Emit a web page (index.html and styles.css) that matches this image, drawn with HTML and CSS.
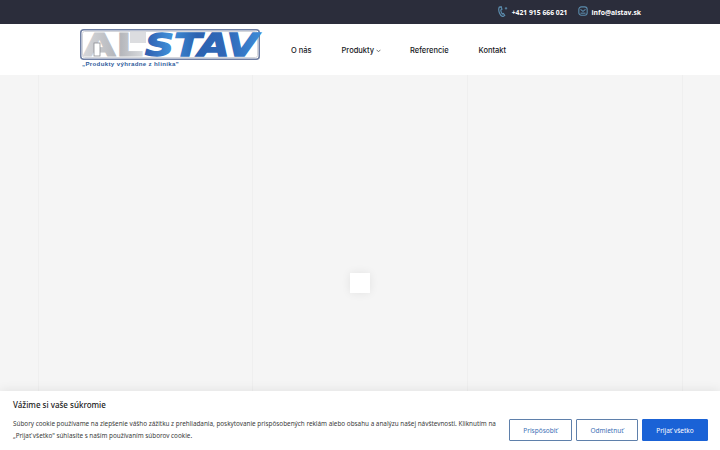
FILE: index.html
```html
<!DOCTYPE html>
<html lang="sk">
  <head>
    <meta charset="UTF-8" />
    <title>Alstav</title>
    <link rel="stylesheet" href="styles.css">
  </head>
  <body>
    <div class="topbar">
      <a class="top-link phone">
        <svg class="top-icon" width="10" height="11" viewBox="0 0 10 11" fill="none" stroke="#5b8cad" stroke-width="1.2">
          <path d="M1.2 1.2 L3.2 .8 L3.9 3.2 L2.8 4 C2.8 5.8 3.3 7 4.3 8 L5.4 7.5 L6.7 9.4 L5 10.6 C2 10.2 -.2 4.5 1.2 1.2 Z" />
          <path d="M8 1 V3.6 M6.8 2.3 H9.2" stroke-width=".9" />
        </svg>
        <span>+421 915 666 021</span>
      </a>
      <a class="top-link">
        <svg class="top-icon" width="10" height="10" viewBox="0 0 12 12" fill="none" stroke="#5b8cad" stroke-width="1.3">
          <rect x="1" y="1" width="10" height="10" rx="3" />
          <path d="M3 4 L6 6.4 L9 4" />
          <path d="M3 8.6 H9" />
        </svg>
        <span>info@alstav.sk</span>
      </a>
    </div>

    <header class="header">
      <div class="logo">
        <svg class="logo-art" width="180" height="31" viewBox="0 0 180 31">
          <defs>
            <linearGradient id="grey" x1="0" x2="1" y1="0" y2="0">
              <stop offset="0" stop-color="#d6d7da" />
              <stop offset=".6" stop-color="#b2b4b9" />
              <stop offset="1" stop-color="#d8dadd" />
            </linearGradient>
            <linearGradient id="blue" x1="0" x2="1" y1="0" y2="0">
              <stop offset="0" stop-color="#2f5cae" />
              <stop offset=".22" stop-color="#3f8fd8" />
              <stop offset=".45" stop-color="#2c62b0" />
              <stop offset=".7" stop-color="#2f68b8" />
              <stop offset="1" stop-color="#3d8ad6" />
            </linearGradient>
          </defs>
          <rect x=".75" y=".75" width="178.5" height="29.5" rx="3" fill="#fff" stroke="#6f7fa3" stroke-width="1.5" />
          <rect x="2.5" y="2.5" width="175" height="26" rx="2" fill="none" stroke="#d5d7dc" />
          <rect x="50" y="3" width="16" height="11" fill="#dcdde0" />
          <text class="logo-word logo-grey" x="3" y="27" textLength="60" lengthAdjust="spacingAndGlyphs" fill="url(#grey)" stroke="url(#grey)">AL</text>
          <rect x="14" y="14" width="6" height="13" fill="#fff" stroke="#8a8c92" stroke-width=".8" />
          <text class="logo-word logo-blue" x="65" y="27" textLength="113" lengthAdjust="spacingAndGlyphs" fill="url(#blue)" stroke="url(#blue)">STAV</text>
        </svg>
        <div class="tagline">„Produkty výhradne z hliníka"</div>
      </div>
      <nav class="nav">
        <a>O nás</a>
        <a class="has-sub">Produkty
          <svg width="5" height="4" viewBox="0 0 5 4" fill="none" stroke="#555" stroke-width=".8"><path d="M.6 .8 L2.5 2.8 L4.4 .8" /></svg>
        </a>
        <a>Referencie</a>
        <a>Kontakt</a>
      </nav>
    </header>

    <main class="content">
      <div class="col"></div>
      <div class="col"></div>
      <div class="col"></div>
      <div class="loader"></div>
    </main>

    <div class="cookie">
      <div class="cookie-title">Vážime si vaše súkromie</div>
      <div class="cookie-row">
        <p class="cookie-text">Súbory cookie používame na zlepšenie vášho zážitku z prehliadania, poskytovanie prispôsobených reklám alebo obsahu a analýzu našej návštevnosti. Kliknutím na „Prijať všetko" súhlasíte s naším používaním súborov cookie.</p>
        <div class="cookie-buttons">
          <button class="btn btn-custom">Prispôsobiť</button>
          <button class="btn btn-reject">Odmietnuť</button>
          <button class="btn btn-accept">Prijať všetko</button>
        </div>
      </div>
    </div>
  </body>
</html>
```

FILE: styles.css
```css
html, body {
  height: 100%;
}
body {
  margin: 0;
  height: 450px;
  overflow: hidden;
  display: flex;
  flex-direction: column;
  position: relative;
  background: #f5f5f5;
  font-family: "Inter", "Liberation Sans", sans-serif;
}
.topbar {
  height: 24px;
  flex: none;
  display: flex;
  justify-content: flex-end;
  align-items: center;
  gap: 10px;
  padding: 0 79px 0 0;
  background: #2b2d3b;
  color: #fff;
  font-family: "Open Sans", "Liberation Sans", sans-serif;
  font-size: 6.8px;
  font-weight: 700;
}
.top-link {
  display: flex;
  align-items: center;
  gap: 4px;
}
.top-icon {
  margin-top: -2px;
}
.header {
  height: 51px;
  flex: none;
  display: flex;
  align-items: center;
  padding-left: 80px;
  background: #fff;
}
.logo {
  width: 180px;
  margin-top: -2px;
}
.logo-art {
  display: block;
  overflow: visible;
}
.logo-word {
  font-family: "DejaVu Sans", sans-serif;
  font-size: 32px;
  font-weight: 700;
  stroke-width: .8px;
}
.logo-blue {
  font-style: italic;
  stroke-width: 1.3px;
}
.tagline {
  margin: 0 0 0 2px;
  font-family: "Liberation Sans", sans-serif;
  font-size: 6.1px;
  font-weight: 700;
  line-height: 8px;
  letter-spacing: .35px;
  color: #2f5c9c;
}
.nav {
  display: flex;
  margin: 1px 0 0 31px;
  gap: 30px;
  font-size: 7.5px;
  font-weight: 500;
  color: #16181d;
}
.has-sub {
  margin-right: -1px;
}
.has-sub svg {
  margin-left: 0;
}
.content {
  flex: 1;
  position: relative;
  display: grid;
  grid-template-columns: 214px 215px 215px;
  margin: 0 37px 0 38px;
  border-right: 1px solid #efefef;
}
.col {
  border-left: 1px solid #efefef;
}
.loader {
  position: absolute;
  left: 312px;
  top: 198px;
  width: 20px;
  height: 20px;
  background: #fff;
  box-shadow: 0 0 10px rgba(0, 0, 0, .08);
}
.cookie {
  position: absolute;
  left: 0;
  right: 0;
  bottom: 0;
  height: 59px;
  box-sizing: border-box;
  padding: 8px 12px 0 13px;
  background: #fff;
  box-shadow: 0 -1px 10px rgba(0, 0, 0, .08);
  font-family: "Noto Sans", "Open Sans", sans-serif;
  color: #212121;
}
.cookie-title {
  font-size: 8px;
  font-weight: 500;
  line-height: 12px;
}
.cookie-row {
  display: flex;
  justify-content: space-between;
  align-items: flex-start;
  margin-top: 7px;
}
.cookie-text {
  width: 490px;
  margin: 0;
  font-size: 6.35px;
  line-height: 12px;
  color: #3a3a3a;
}
.cookie-buttons {
  display: flex;
  gap: 4px;
  margin-top: 1px;
}
.btn {
  height: 22px;
  padding: 0;
  box-sizing: border-box;
  border: 1.5px solid #5f80ab;
  border-radius: 1px;
  background: #fff;
  color: #3d6fb5;
  font-family: inherit;
  font-size: 6.5px;
}
.btn-custom {
  width: 63px;
}
.btn-reject {
  width: 62px;
}
.btn-accept {
  width: 66px;
  border-color: #1a62d6;
  background: #1a62d6;
  color: #fff;
}
```
